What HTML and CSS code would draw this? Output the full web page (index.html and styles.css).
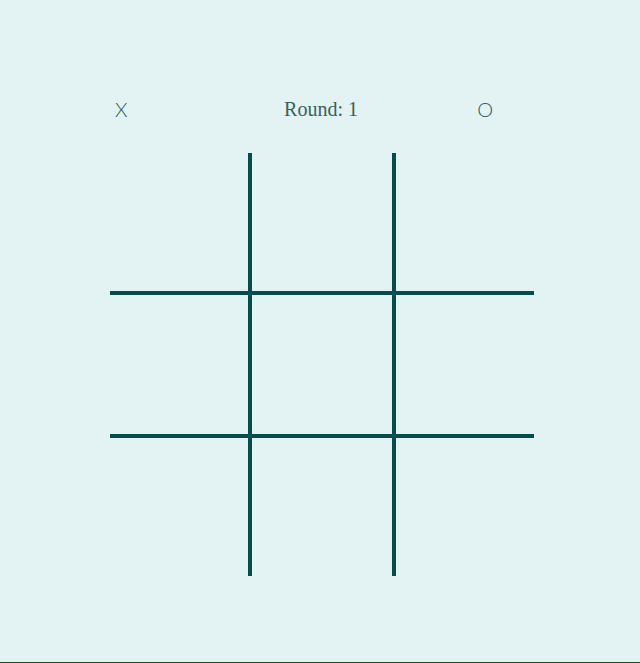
FILE: index.html
```html
<!DOCTYPE html>
<html>
<head>
<meta charset="utf-8">
<link rel="stylesheet" href="styles.css">
</head>
<body>
<div class="page">
  <div class="header">
    <span class="player player-x">X</span>
    <span class="round">Round: 1</span>
    <span class="player player-o">O</span>
  </div>
  <div class="board">
    <div class="cell"></div><div class="cell"></div><div class="cell"></div>
    <div class="cell"></div><div class="cell"></div><div class="cell"></div>
    <div class="cell"></div><div class="cell"></div><div class="cell"></div>
  </div>
</div>
</body>
</html>
```
FILE: styles.css
```css
html, body {
  margin: 0;
  padding: 0;
  background: #e3f2f3;
}
.page {
  height: 662px;
  border-bottom: 1px solid #0b5a12;
  box-sizing: content-box;
  padding-left: 110px;
}
.header {
  width: 424px;
  padding-top: 96px;
  display: grid;
  grid-template-columns: 1fr auto 1fr;
  align-items: center;
  height: 26px;
  color: #2a5c5c;
}
.player {
  font-family: Lato, sans-serif;
  font-weight: 300;
  font-size: 20px;
  line-height: 26px;
}
.player-x {
  justify-self: start;
  padding-left: 5px;
}
.player-o {
  justify-self: end;
  margin-right: 41px;
}
.round {
  font-family: "Liberation Serif", serif;
  font-size: 20px;
  line-height: 26px;
  color: #34625f;
  margin-left: -2px;
}
.board {
  margin-top: 31px;
  width: 424px;
  display: grid;
  grid-template-columns: 138px 140px 138px;
  grid-template-rows: 138px 139px 138px;
  gap: 4px;
  background: #054d4b;
}
.cell {
  background: #e3f2f3;
}
```
